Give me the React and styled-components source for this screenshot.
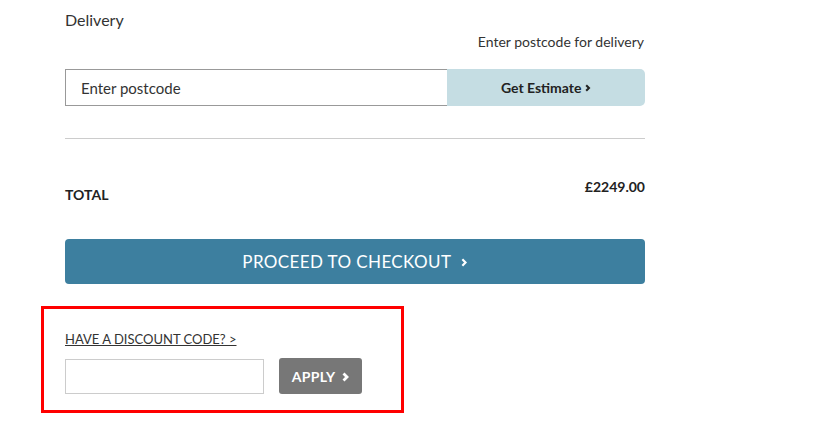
import React from 'react';
import styled, { createGlobalStyle } from 'styled-components';

const GlobalStyle = createGlobalStyle`
  body {
    margin: 0;
    background: #fff;
    font-family: Lato, "Open Sans", sans-serif;
    color: #333;
  }
`;

const Page = styled.div`
  width: 822px;
  height: 427px;
  overflow: hidden;
  padding: 0 177px 0 65px;
  box-sizing: border-box;
`;

const Column = styled.div`
  width: 580px;
`;

const Heading = styled.h3`
  margin: 0;
  padding-top: 10px;
  font-size: 16px;
  font-weight: 400;
  line-height: 20px;
  color: #333;
`;

const Hint = styled.p`
  margin: 3px 0 0;
  text-align: right;
  font-size: 14px;
  line-height: 18px;
  color: #333;
  padding-right: 1px;
`;

const PostcodeRow = styled.div`
  display: flex;
  height: 37px;
  margin-top: 18px;
`;

const PostcodeInput = styled.input`
  width: 382px;
  box-sizing: border-box;
  border: 1px solid #999;
  border-right: none;
  padding: 0 15px;
  font-family: Lato, sans-serif;
  font-size: 15px;
  color: #333;
  outline: none;
  &::placeholder { color: #333; }
`;

const EstimateButton = styled.button`
  flex: 1;
  border: none;
  background: #c5dde3;
  border-radius: 0 5px 5px 0;
  font-family: Lato, sans-serif;
  font-weight: 700;
  font-size: 14px;
  color: #222;
  cursor: pointer;
`;

const Divider = styled.hr`
  margin: 32px 0 0;
  border: none;
  border-top: 1px solid #ccc;
`;

const TotalRow = styled.div`
  display: flex;
  justify-content: space-between;
  align-items: flex-start;
  margin-top: 39px;
  line-height: 17px;
`;

const TotalLabel = styled.span`
  font-size: 14px;
  font-weight: 700;
  text-transform: uppercase;
  color: #222;
  padding-top: 8px;
`;

const TotalValue = styled.span`
  font-size: 14px;
  font-weight: 700;
  color: #222;
`;

const CheckoutButton = styled.button`
  display: block;
  width: 100%;
  height: 45px;
  margin-top: 36px;
  border: none;
  border-radius: 4px;
  background: #3d7f9f;
  color: #fff;
  font-family: Lato, sans-serif;
  font-size: 17px;
  letter-spacing: 0.4px;
  cursor: pointer;
`;

const Highlight = styled.div`
  margin: 22px 0 0 -24px;
  width: 363px;
  height: 107px;
  box-sizing: border-box;
  border: 3px solid #f00;
  padding: 19px 0 0 21px;
`;

const DiscountLink = styled.a`
  display: inline-block;
  font-size: 13px;
  color: #333;
  text-decoration: underline;
  line-height: 16px;
  cursor: pointer;
`;

const DiscountRow = styled.div`
  display: flex;
  align-items: flex-start;
  gap: 15px;
  margin-top: 11px;
`;

const DiscountInput = styled.input`
  width: 199px;
  height: 35px;
  margin-top: 1px;
  box-sizing: border-box;
  border: 1px solid #ccc;
  outline: none;
`;

const ApplyButton = styled.button`
  width: 83px;
  height: 36px;
  border: none;
  border-radius: 3px;
  background: #777;
  color: #fff;
  font-family: Lato, sans-serif;
  font-weight: 700;
  font-size: 14px;
  letter-spacing: 0.3px;
  cursor: pointer;
`;

const ChevronIcon = styled.svg`
  margin-left: ${(p) => p.$gap}px;
  vertical-align: middle;
  position: relative;
  top: -1px;
`;

const Chevron = ({ size = 8, stroke = 2, gap = 6 }) => (
  <ChevronIcon $gap={gap} width={size * 0.7} height={size} viewBox="0 0 7 10">
    <path d="M1.5 1.5 L5 5 L1.5 8.5" fill="none" stroke="currentColor" strokeWidth={stroke} />
  </ChevronIcon>
);

export default function App() {
  return (
    <>
      <GlobalStyle />
      <Page>
        <Column>
          <Heading>Delivery</Heading>
          <Hint>Enter postcode for delivery</Hint>
          <PostcodeRow>
            <PostcodeInput placeholder="Enter postcode" />
            <EstimateButton>Get Estimate<Chevron size={8} stroke={2.6} gap={4} /></EstimateButton>
          </PostcodeRow>
          <Divider />
          <TotalRow>
            <TotalLabel>Total</TotalLabel>
            <TotalValue>£2249.00</TotalValue>
          </TotalRow>
          <CheckoutButton>PROCEED TO CHECKOUT<Chevron size={9} stroke={2.4} gap={10} /></CheckoutButton>
          <Highlight>
            <DiscountLink>HAVE A DISCOUNT CODE? &gt;</DiscountLink>
            <DiscountRow>
              <DiscountInput />
              <ApplyButton>APPLY<Chevron size={10} stroke={2.8} gap={7} /></ApplyButton>
            </DiscountRow>
          </Highlight>
        </Column>
      </Page>
    </>
  );
}
